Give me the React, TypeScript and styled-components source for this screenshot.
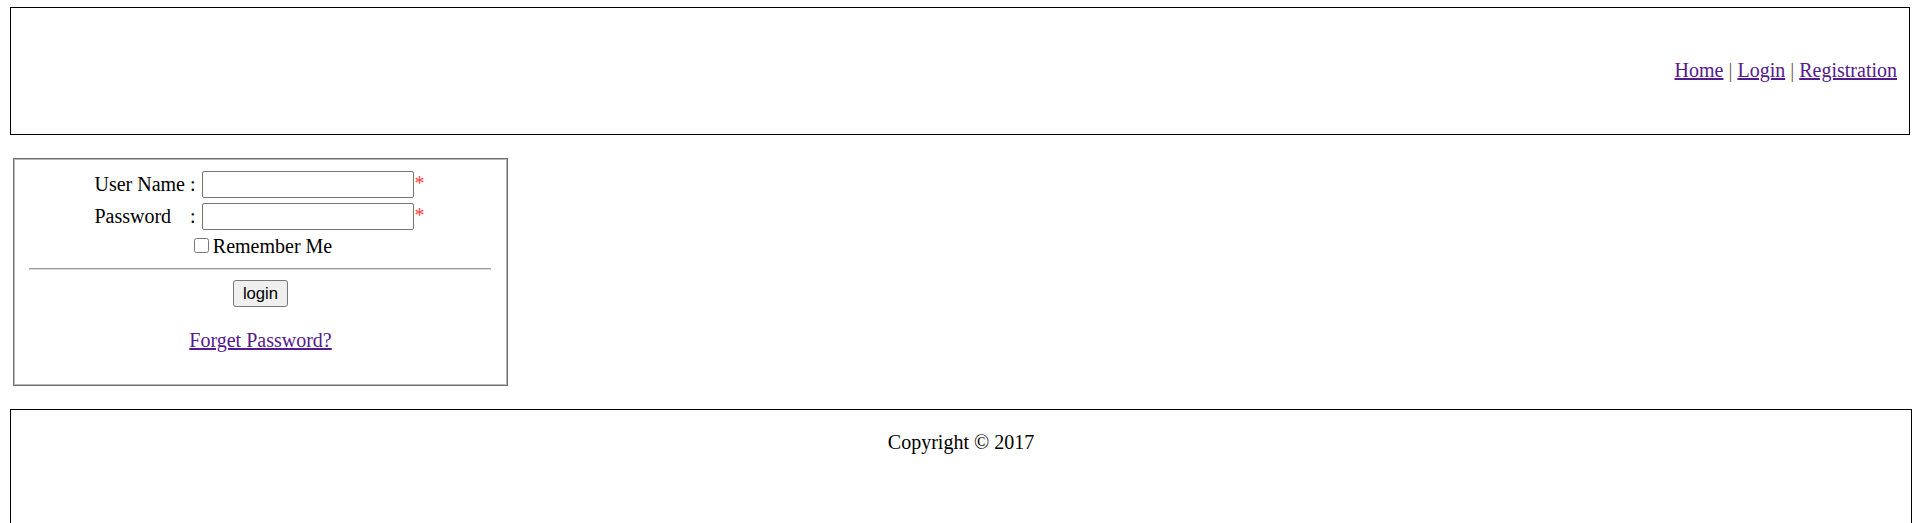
import React from "react";
import styled, { createGlobalStyle } from "styled-components";

const GlobalStyle = createGlobalStyle`
  html, body {
    background: #ffffff;
  }
  body {
    margin: 7px 0 0 10px;
    font-family: "Liberation Serif", "Times New Roman", serif;
    font-size: 20px;
    line-height: 23px;
    color: #000000;
    overflow: hidden;
  }
`;

const Page = styled.div`
  display: flex;
  flex-direction: column;
  align-items: flex-start;
`;

const Header = styled.header`
  box-sizing: border-box;
  width: 1900px;
  height: 128px;
  border: 1px solid #000000;
  display: flex;
  align-items: center;
  justify-content: flex-end;
  padding: 0 12px 2px 0;
`;

const Nav = styled.nav`
  white-space: pre;
`;

const NavLink = styled.a`
  color: #551a8b;
  text-decoration: underline;
`;

const Separator = styled.span`
  color: #6b5a48;
`;

const LoginBox = styled.section`
  box-sizing: border-box;
  width: 495px;
  height: 228px;
  margin: 23px 0 0 3px;
  border: 1px solid #6f6f6f;
  box-shadow: inset 0 0 0 1px #b8b8b8;
  padding: 12px 15px 0 15px;
  display: flex;
  flex-direction: column;
  align-items: center;
`;

const FieldGrid = styled.div`
  display: grid;
  grid-template-columns: auto auto auto;
  column-gap: 6px;
  row-gap: 5px;
  align-items: center;
  justify-content: center;
  margin-left: -2px;
`;

const Label = styled.label`
  display: flex;
  justify-content: space-between;
  white-space: pre;
`;

const TextInput = styled.input`
  box-sizing: border-box;
  width: 212px;
  height: 27px;
  margin: 0;
  border: 1px solid #767676;
  border-radius: 2px;
  padding: 1px 3px;
  font-family: "Liberation Sans", Arial, sans-serif;
  font-size: 16.67px;
  background: #ffffff;
`;

const Required = styled.span`
  color: #ff3b3b;
  align-self: start;
  margin-left: -5px;
  line-height: 23px;
  margin-top: 1px;
`;

const RememberRow = styled.label`
  display: flex;
  align-items: center;
  margin-top: 5px;
  height: 23px;
`;

const CheckBox = styled.input`
  width: 15px;
  height: 15px;
  margin: 0 4px 3px 5px;
`;

const Rule = styled.hr`
  align-self: stretch;
  box-sizing: border-box;
  height: 2px;
  margin: 10px 1px 10px 0;
  border: none;
  border-top: 1px solid #9c9c9c;
  border-bottom: 1px solid #d9d9d9;
`;

const Button = styled.button`
  box-sizing: border-box;
  height: 27px;
  padding: 0 9px;
  margin: 0;
  border: 1px solid #767676;
  border-radius: 3px;
  background: #efefef;
  color: #000000;
  font-family: "Liberation Sans", Arial, sans-serif;
  font-size: 16.67px;
  line-height: 20px;
`;

const ForgotLink = styled.a`
  margin-top: 22px;
  color: #551a8b;
  text-decoration: underline;
`;

const Footer = styled.footer`
  box-sizing: border-box;
  width: 1902px;
  height: 130px;
  margin-top: 23px;
  border: 1px solid #000000;
  padding-top: 21px;
  text-align: center;
`;

export default function App() {
  return (
    <>
      <GlobalStyle />
      <Page>
        <Header>
          <Nav>
            <NavLink href="#">Home</NavLink>
            <Separator> | </Separator>
            <NavLink href="#">Login</NavLink>
            <Separator> | </Separator>
            <NavLink href="#">Registration</NavLink>
          </Nav>
        </Header>

        <LoginBox>
          <FieldGrid>
            <Label htmlFor="user">
              <span>User Name</span>
              <span> :</span>
            </Label>
            <TextInput id="user" type="text" />
            <Required>*</Required>

            <Label htmlFor="pass">
              <span>Password</span>
              <span>:</span>
            </Label>
            <TextInput id="pass" type="password" />
            <Required>*</Required>
          </FieldGrid>

          <RememberRow>
            <CheckBox type="checkbox" />
            Remember Me
          </RememberRow>

          <Rule />

          <Button type="button">login</Button>

          <ForgotLink href="#">Forget Password?</ForgotLink>
        </LoginBox>

        <Footer>Copyright © 2017</Footer>
      </Page>
    </>
  );
}
